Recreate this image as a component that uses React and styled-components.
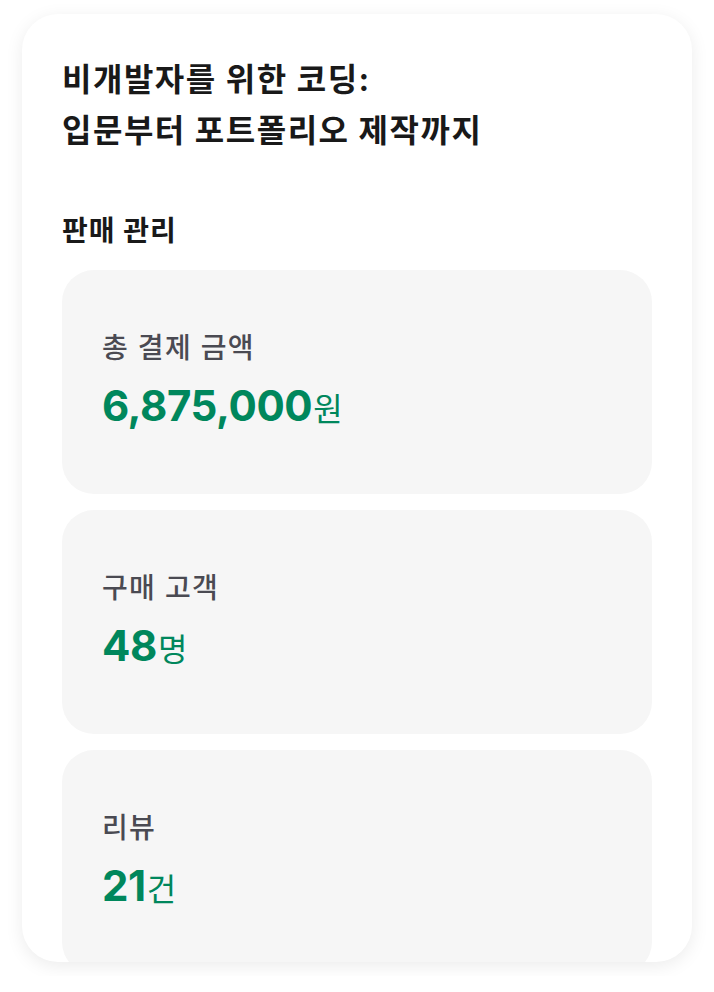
import React from 'react';
import styled, { createGlobalStyle } from 'styled-components';

const GlobalStyle = createGlobalStyle`
  body {
    margin: 0;
    background: #ffffff;
    font-family: Inter, "Noto Sans CJK KR", sans-serif;
    -webkit-font-smoothing: antialiased;
  }
`;

const Page = styled.div`
  padding: 14px 22px;
`;

const Panel = styled.section`
  height: 948px;
  box-sizing: border-box;
  padding: 40px 40px 0;
  background: #ffffff;
  border-radius: 36px;
  box-shadow: 0 4px 18px rgba(0, 0, 0, 0.08);
  overflow: hidden;
`;

const CourseTitle = styled.h1`
  margin: 0;
  font-size: 32px;
  line-height: 51px;
  font-weight: 700;
  color: #191919;
  letter-spacing: 1.5px;
`;

const SectionTitle = styled.h2`
  margin: 57px 0 21px;
  font-size: 28px;
  line-height: 36px;
  font-weight: 700;
  color: #191919;
  letter-spacing: 1px;
`;

const StatList = styled.div`
  display: flex;
  flex-direction: column;
  gap: 16px;
`;

const StatCard = styled.div`
  height: 224px;
  box-sizing: border-box;
  padding: 0 40px;
  display: flex;
  flex-direction: column;
  justify-content: center;
  gap: 16px;
  background: #f6f6f6;
  border-radius: 32px;
  flex-shrink: 0;
`;

const StatLabel = styled.div`
  font-size: 28px;
  line-height: 36px;
  font-weight: 500;
  color: #4a4a52;
  letter-spacing: 1.3px;
`;

const StatValue = styled.div`
  display: flex;
  align-items: baseline;
  color: #00875c;
  line-height: 48px;
`;

const Number = styled.span`
  font-size: 42px;
  font-weight: 700;
  letter-spacing: -0.4px;
`;

const Unit = styled.span`
  font-size: 32px;
  font-weight: 400;
  margin-left: 1px;
`;

const stats = [
  { label: '총 결제 금액', value: '6,875,000', unit: '원' },
  { label: '구매 고객', value: '48', unit: '명' },
  { label: '리뷰', value: '21', unit: '건' },
];

const App = () => {
  return (
    <>
      <GlobalStyle />
      <Page>
        <Panel>
          <CourseTitle>
            비개발자를 위한 코딩:
            <br />
            입문부터 포트폴리오 제작까지
          </CourseTitle>
          <SectionTitle>판매 관리</SectionTitle>
          <StatList>
            {stats.map((item) => (
              <StatCard key={item.label}>
                <StatLabel>{item.label}</StatLabel>
                <StatValue>
                  <Number>{item.value}</Number>
                  <Unit>{item.unit}</Unit>
                </StatValue>
              </StatCard>
            ))}
          </StatList>
        </Panel>
      </Page>
    </>
  );
};

export default App;
